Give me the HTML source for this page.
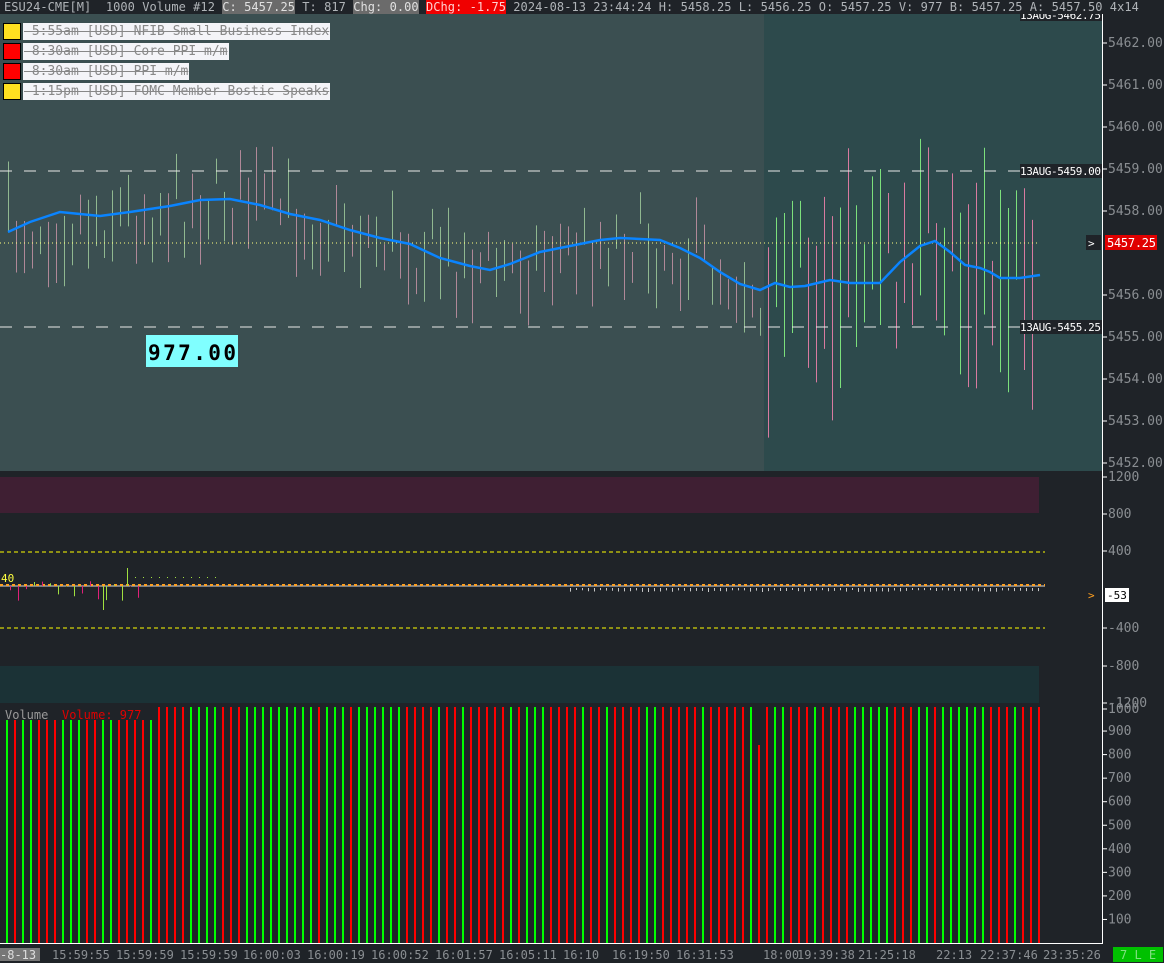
<!DOCTYPE html>
<html><head><meta charset="utf-8"><style>
body{margin:0;width:1164px;height:963px;overflow:hidden;background:#1f2328;font-family:"DejaVu Sans Mono","Liberation Mono",monospace;}
#top{position:absolute;left:0;top:0;width:1160px;padding-left:4px;height:14px;background:#1f2328;color:#b0b4b8;font-size:12px;line-height:14px;white-space:pre;font-family:"DejaVu Sans Mono",monospace;letter-spacing:0.05px}
#top span.g{background:#6b6b6b;color:#e0e0e0}
#top span.r{background:#f00000;color:#ffd0d0}
.ev{position:absolute;left:3px;height:17px;font-size:13px;line-height:17px;white-space:pre;font-family:"DejaVu Sans Mono",monospace;}
.ev i{position:absolute;left:0;top:0;width:16px;height:15px;border:1px solid #000;}
.ev b{position:absolute;left:20px;top:0;background:#f4f4f8;color:#888;font-weight:normal;text-decoration:line-through;padding:0 1px;}
svg text{font-family:"DejaVu Sans Mono","Liberation Mono",monospace;}
</style></head><body>
<svg id="s" width="1164" height="963" style="position:absolute;left:0;top:0">
<rect x="0" y="14" width="764" height="457" fill="#3b4f51"/>
<rect x="764" y="14" width="338" height="457" fill="#2d4a4c"/>
<rect x="0" y="471" width="1102" height="472" fill="#1f2328"/>
<rect x="0" y="477" width="1039" height="36" fill="#3f1f33"/>
<rect x="0" y="666" width="1039" height="37" fill="#1b3236"/>
<g id="pb"></g>
<line x1="0" y1="171" x2="1020" y2="171" stroke="#e8e8e8" stroke-dasharray="12,12"/>
<line x1="0" y1="327" x2="1020" y2="327" stroke="#e8e8e8" stroke-dasharray="12,12"/>
<line x1="0" y1="243" x2="1037" y2="243" stroke="#ffff80" stroke-dasharray="1,3"/>
<polyline fill="none" stroke="#0a84ff" stroke-width="2.5" points="8,232 30,222 60,212 80,214 100,216 130,212 170,206 200,200 230,199 260,205 290,214 320,220 350,230 380,238 410,244 440,258 470,266 490,270 510,264 540,252 570,246 600,240 620,238 660,240 680,248 700,258 720,272 740,284 760,290 775,283 790,287 805,286 830,280 850,283 880,283 900,262 920,246 935,241 950,252 965,265 980,268 990,272 1000,278 1020,278 1040,275"/>
<rect x="1020" y="164" width="82" height="14" fill="#1f2328"/><text x="1020" y="175" fill="#fff" font-size="11" textLength="81">13AUG-5459.00</text>
<rect x="1020" y="320" width="82" height="14" fill="#1f2328"/><text x="1020" y="331" fill="#fff" font-size="11" textLength="81">13AUG-5455.25</text>
<rect x="1020" y="8" width="82" height="13" fill="#1f2328"/><text x="1020" y="19" fill="#fff" font-size="11" textLength="81">13AUG-5462.75</text>
<rect x="146" y="335" width="92" height="32" fill="#80ffff"/><text x="148" y="360" fill="#000" font-size="21" font-weight="bold" textLength="88">977.00</text>
<rect x="1086" y="235" width="15" height="15" fill="#1f2328"/><text x="1088" y="247" fill="#fff" font-size="11">&gt;</text>
<rect x="1105" y="235" width="52" height="15" fill="#e00000"/><text x="1107" y="247" fill="#fff" font-size="12" textLength="49">5457.25</text>
<line x1="0" y1="552" x2="1045" y2="552" stroke="#ffff00" stroke-dasharray="4,3"/>
<line x1="0" y1="628" x2="1045" y2="628" stroke="#ffff00" stroke-dasharray="4,3"/>
<line x1="0" y1="586" x2="1045" y2="586" stroke="#dddddd"/>
<line x1="0" y1="585" x2="1045" y2="585" stroke="#ffa020" stroke-width="2" stroke-dasharray="3,3"/>
<text x="1" y="582" fill="#ffff40" font-size="11">40</text>
<g id="ob"></g>
<text x="1088" y="599" fill="#ffa020" font-size="11">&gt;</text>
<rect x="1105" y="588" width="24" height="14" fill="#fff"/><text x="1107" y="599" fill="#000" font-size="11">-53</text>
<g id="vb"></g>
<text x="5" y="719" fill="#9a9a9a" font-size="12">Volume</text><text x="62" y="719" fill="#e00000" font-size="12">Volume: 977</text>
<line x1="1102.5" y1="0" x2="1102.5" y2="943" stroke="#fff"/>
<line x1="0" y1="943.5" x2="1103" y2="943.5" stroke="#fff"/>
<g id="ax" fill="#8a8e92" font-size="13"></g>
<rect x="0" y="948" width="40" height="13" fill="#777"/><text x="0" y="959" fill="#ddd" font-size="12">-8-13</text>
<g fill="#8a8e92" font-size="12">
<text x="52" y="959">15:59:55</text><text x="116" y="959">15:59:59</text><text x="180" y="959">15:59:59</text><text x="243" y="959">16:00:03</text><text x="307" y="959">16:00:19</text><text x="371" y="959">16:00:52</text><text x="435" y="959">16:01:57</text><text x="499" y="959">16:05:11</text><text x="563" y="959">16:10</text><text x="612" y="959">16:19:50</text><text x="676" y="959">16:31:53</text><text x="763" y="959">18:00</text><text x="797" y="959">19:39:38</text><text x="858" y="959">21:25:18</text><text x="936" y="959">22:13</text><text x="980" y="959">22:37:46</text><text x="1043" y="959">23:35:26</text>
</g>
<rect x="1113" y="947" width="50" height="15" fill="#00c000"/><text x="1120" y="959" fill="#80e080" font-size="12">7 L E</text>
</svg>
<div id="top">ESU24-CME[M]  1000 Volume #12 <span class="g">C: 5457.25</span> T: 817 <span class="g">Chg: 0.00</span> <span class="r">DChg: -1.75</span> 2024-08-13 23:44:24 H: 5458.25 L: 5456.25 O: 5457.25 V: 977 B: 5457.25 A: 5457.50 4x14</div>
<div class="ev" style="top:23px"><i style="background:#ffe020"></i><b> 5:55am [USD] NFIB Small Business Index</b></div>
<div class="ev" style="top:43px"><i style="background:#ff0000"></i><b> 8:30am [USD] Core PPI m/m</b></div>
<div class="ev" style="top:63px"><i style="background:#ff0000"></i><b> 8:30am [USD] PPI m/m</b></div>
<div class="ev" style="top:83px"><i style="background:#ffe020"></i><b> 1:15pm [USD] FOMC Member Bostic Speaks</b></div>
<script>
var NS="http://www.w3.org/2000/svg",seed=7;function r(){seed=(seed*16807)%2147483647;return seed/2147483647;}
function L(g,x1,y1,x2,y2,c,w){var l=document.createElementNS(NS,"line");l.setAttribute("x1",x1);l.setAttribute("y1",y1);l.setAttribute("x2",x2);l.setAttribute("y2",y2);l.setAttribute("stroke",c);l.setAttribute("stroke-width",w||1);document.getElementById(g).appendChild(l);}
var ma=[[8,232],[100,216],[230,199],[350,230],[490,270],[620,238],[700,258],[760,290],[880,283],[935,241],[1040,275]];
function m(x){for(var i=1;i<ma.length;i++)if(x<=ma[i][0]){var a=ma[i-1],b=ma[i];return a[1]+(b[1]-a[1])*(x-a[0])/(b[0]-a[0]);}return 275;}
for(var x=8;x<1040;x+=8){var big=x>764?1:0;var c=m(x)+(r()-0.5)*(big?120:70);var h=(big?60:25)+r()*(big?150:50);var col=r()<0.5?"#7ce07c":"#d87aa0";if(!big)col=r()<0.5?"#90b890":"#b08898";L("pb",x+.5,c-h/2,x+.5,c+h/2,col);}
for(var x=6;x<1040;x+=8){var t=x<155?720:707;if(x==758)t=745;L("vb",x+1,t,x+1,943,r()<0.5?"#00ff00":"#ff0000",2);}
for(var x=10;x<140;x+=8){var h=r()*20-5;L("ob",x+.5,586,x+.5,586+h,r()<0.5?"#a0e040":"#e0207a");}
L("ob",127.5,568,127.5,586,"#a0e040");L("ob",103.5,586,103.5,610,"#a0e040");
for(var x=135;x<220;x+=8)L("ob",x+.5,577,x+.5,578,"#a0e040");
for(var x=570;x<1040;x+=6)L("ob",x+.5,588,x+.5,590+r()*2,"#c8c8c8");
var ax=document.getElementById("ax");function T(y,s){L("ax",1102,y,1107,y,"#fff");var t=document.createElementNS(NS,"text");t.setAttribute("x",1108);t.setAttribute("y",y+4);t.textContent=s;ax.appendChild(t);}
for(var p=5462;p>=5452;p--)if(p!=5457)T(43+(5462-p)*42,p+".00");
T(477,"1200");T(514,"800");T(551,"400");T(628,"-400");T(666,"-800");T(703,"-1200");
T(709,"1000");for(var v=900;v>=100;v-=100)T(943-v*0.2355,""+v);
</script>
</body></html>
